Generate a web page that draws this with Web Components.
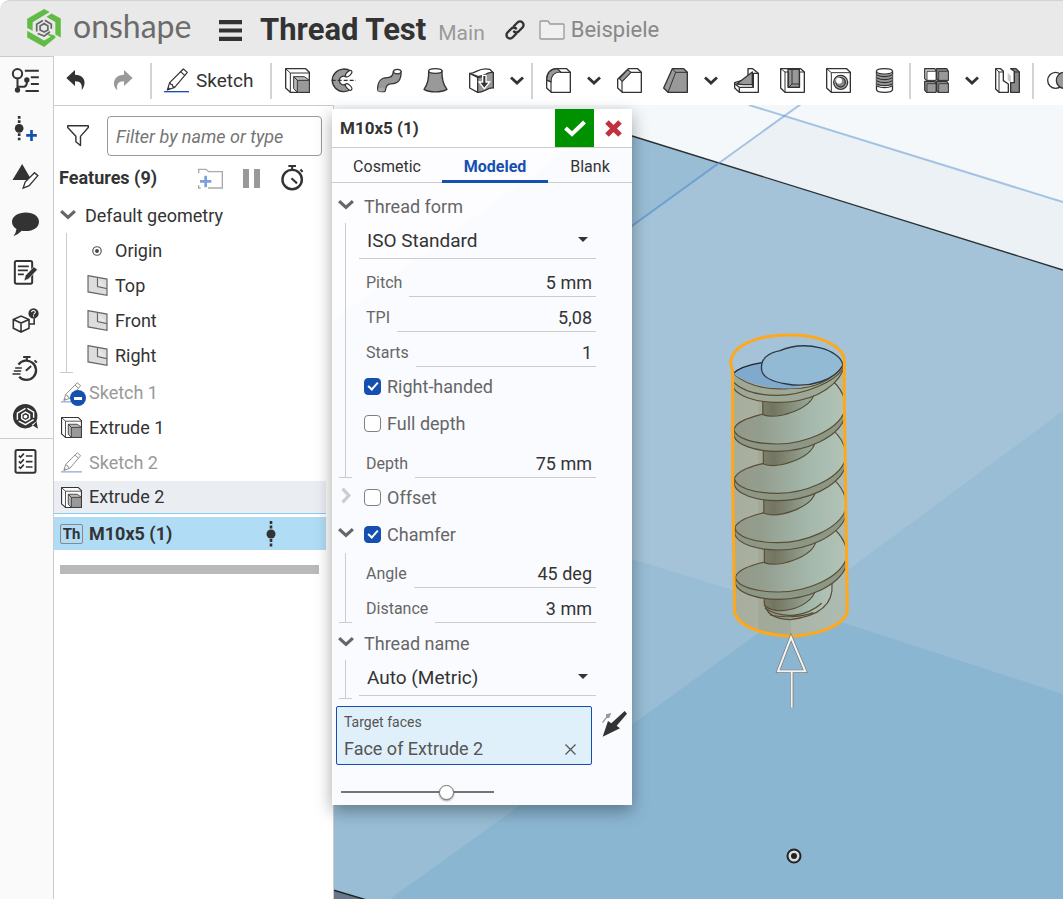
<!DOCTYPE html>
<html lang="en">
<head>
<meta charset="utf-8">
<meta name="viewport" content="width=device-width, initial-scale=1">
<title>Thread Test</title>
<style>
  html, body { margin: 0; height: 100%; }
  body { font-family: Roboto, "Liberation Sans", sans-serif; color: #333; background: #fff; }
</style>
</head>
<body>
<cad-app></cad-app>
<script>
const define = (name, html, setup) => {
  const template = document.createElement('template');
  template.innerHTML = html;
  customElements.define(name, class extends HTMLElement {
    connectedCallback() {
      if (this.shadowRoot) return;
      this.attachShadow({ mode: 'open' }).append(template.content.cloneNode(true));
      if (setup) setup(this, this.shadowRoot);
    }
  });
};

const box = '0 0 75 75';
const icons = {
  logo: ['0 0 99 112', `<g fill="#62bb46"><path d="M50 0 66 9 16 39V64L0 56V29Z"/><path d="M72 13 99 28V84L83 75V38L66 29 57 23Z" /><path d="M0 64 50 93 69 82 52 71 80 77 84 84 50 112 0 84Z"/></g><g fill="none" stroke="#666" stroke-width="5"><path d="M28 66V45L46 34"/><path d="M52 33 71 45V58"/><path d="M31 72 50 80 67 67"/><path d="M38 62V50L50 43 61 50V62L50 68Z"/></g>`],
  menu: ['0 0 22 20', `<path fill="#333" d="M0 0h22v4H0zM0 8h22v4H0zM0 16h22v4H0z"/>`],
  link: ['0 0 20 20', `<g fill="none" stroke="#333" stroke-width="2.400" stroke-linecap="round"><path d="M9 6 12.500 2.500a3.300 3.300 0 0 1 5 5L13.500 11.500a3.300 3.300 0 0 1-4.500 0"/><path d="M11 14 7.500 17.500a3.300 3.300 0 0 1-5-5L6.500 8.500a3.300 3.300 0 0 1 4.500 0"/></g>`],
  folder: ['0 0 26 20', `<path fill="#f0f0f0" stroke="#999" stroke-width="1.300" d="M1 2q0-1 1-1h7l2 3h13q1 0 1 1v13q0 1-1 1H2q-1 0-1-1z"/>`],
  undo: ['0 0 58 60', `<path fill="#333" d="M0 24 26 0V14C45 14 58 26 54 44 52 52 48 58 46 60 48 44 44 34 26 34V48Z"/>`],
  redo: ['0 0 58 60', `<path fill="#999" d="M58 24 32 0V14C13 14 0 26 2 44 3 52 8 58 12 60 9 44 14 34 32 34V48Z"/>`],
  sketch: [box, `<g fill="#fff" stroke="#333" stroke-width="3.500" stroke-linejoin="round"><path d="M10 66 17 44 58 3 70 13 32 58Z"/><path d="M17 44 21 49 25 50 26 55 32 58M50 11 62 22"/></g><path fill="#333" d="M10 66 13 57 19 62z"/><path fill="#1550b0" d="M0 69H75V73H0z"/>`],
  extrude: [box, `<g stroke="#333" stroke-width="3" stroke-linejoin="round"><path fill="#fff" stroke-width="4" d="M2 2H62L73 13V73H16L2 60Z"/><path fill="none" d="M2 2 16 15V73M16 15H73"/><path fill="#bbb" d="M26 26H58L73 37V73H37L26 62Z"/><path fill="#999" d="M37 37H73V73H37ZM26 26 37 37"/></g>`],
  revolve: [box, `<path fill="#999" stroke="#333" stroke-width="4" d="M60 10A35 34 0 1 0 60 64L44 49A13 13 0 1 1 44 26Z"/><g fill="#fff" stroke="#333" stroke-width="3.500"><ellipse cx="53" cy="17" rx="12" ry="6" transform="rotate(-45 53 17)"/><ellipse cx="53" cy="57" rx="12" ry="6" transform="rotate(45 53 57)"/></g><path d="M2 37H75" stroke="#333" stroke-width="4" stroke-dasharray="12 6"/>`],
  sweep: ['0 0 80 75', `<path fill="#999" stroke="#333" stroke-width="4" d="M2 66C2 36 14 28 34 28 46 28 51 22 52 9L77 9C78 38 66 48 44 48 32 49 28 56 27 69 26 76 2 74 2 66Z"/><ellipse cx="65" cy="9" rx="12" ry="7" fill="#fff" stroke="#333" stroke-width="4"/><ellipse cx="14" cy="67" rx="11" ry="6" fill="#aaa"/>`],
  loft: [box, `<path fill="#999" stroke="#333" stroke-width="4" stroke-linejoin="round" d="M17 9C18 35 10 55 3 64 20 74 54 74 72 64 62 52 56 35 57 9Z"/><ellipse cx="37" cy="9" rx="20" ry="7" fill="#fff" stroke="#333" stroke-width="4"/>`],
  thicken: [box, `<g stroke="#333" stroke-width="4" stroke-linejoin="round"><path fill="#fff" d="M2 16C20 18 30-4 62 4L73 14 28 26 2 16Z"/><path fill="#fff" d="M2 16 26 28V73L2 60Z"/><path fill="#999" d="M26 28C44 32 50 8 73 14V60C56 58 44 74 26 73Z"/></g><path fill="#333" stroke="#fff" stroke-width="4" d="M41 22H51V42H62L46 62 30 42H41Z"/>`],
  chevron: ['0 0 14 9', `<path fill="none" stroke="currentColor" stroke-width="2.800" d="M1 1.500 7 7 13 1.500"/>`],
  fillet: [box, `<g stroke="#333" stroke-width="3.500" stroke-linejoin="round"><path fill="#fff" stroke-width="4" d="M2 35Q4 2 34 2H62L73 13V73H16L2 60Z"/><path fill="#999" d="M2 36C3 14 14 2 34 2L44 12C26 12 15 22 15 42Z"/><path fill="none" d="M15 40V73M42 13H73M2 36 15 42"/></g>`],
  chamfer: [box, `<g stroke="#333" stroke-width="3.500" stroke-linejoin="round"><path fill="#fff" stroke-width="4" d="M2 34 34 2H62L73 13V73H16L2 60Z"/><path fill="#999" d="M7 32 32 5 42 13 16 40Z"/><path fill="none" d="M15 40V73M42 13H73"/></g>`],
  draft: [box, `<g stroke="#333" stroke-width="4" stroke-linejoin="round"><path fill="#999" d="M2 60 28 2H62L73 13V73H15Z"/><path fill="none" stroke-width="3" d="M15 73 38 13H73M28 2 38 13"/></g>`],
  rib: [box, `<g stroke="#333" stroke-width="4" stroke-linejoin="round"><path fill="#fff" d="M2 44 42 32V2H56L73 16V73H16L2 60Z"/><path fill="#999" d="M8 48 55 12V50H28Z"/><path fill="none" d="M2 47 16 58H58V16H73M55 50 58 58M16 58V73"/></g>`],
  shell: [box, `<g stroke="#333" stroke-width="4" stroke-linejoin="round"><path fill="#fff" d="M2 2H62L73 12V73H15L2 60Z"/><path fill="#999" d="M24 4H58V58H24Z"/><path fill="none" stroke-width="3" d="M2 2 15 12V73M15 12H26V58H59V12H73M36 4V48H58M36 48 26 58"/></g>`],
  hole: [box, `<g stroke="#333" stroke-width="4" stroke-linejoin="round"><path fill="#fff" d="M2 2H62L73 13V73H16L2 60Z"/><path fill="none" stroke-width="3" d="M2 2 16 14V73M16 14H73"/><circle cx="44" cy="43" r="21" fill="#bbb"/><circle cx="44" cy="43" r="14" fill="#888"/><circle cx="39" cy="38" r="9" fill="#fff" stroke="none"/></g>`],
  thread: ['0 0 52 75', `<path fill="#fff" stroke="#333" stroke-width="4" d="M2 9V65C4 76 48 76 50 65V9"/><path fill="#999" d="M2 18H50V54H2z"/><g fill="none" stroke="#333" stroke-width="3.500"><path d="M2 20Q26 32 50 20M2 29Q26 41 50 29M2 38Q26 50 50 38M2 47Q26 59 50 47M2 54Q26 64 50 54"/><ellipse cx="26" cy="10" rx="24" ry="8" fill="#fff"/></g>`],
  pattern: [box, `<g stroke="#333" stroke-width="3.500" stroke-linejoin="round"><path fill="#ccc" d="M2 2H33L36 10V37H8L2 32Z"/><path fill="#888" d="M38 2H68L73 10V37H42L38 32ZM2 40H33L36 47V73H8L2 66ZM38 40H68L73 47V73H42L38 66Z"/><g stroke-width="2.500"><path fill="#fff" d="M9 10H36V37H9z"/><path fill="#999" d="M44 10H73V37H44zM9 47H36V73H9zM44 47H73V73H44z"/></g></g>`],
  split: [box, `<path fill="#ccc" d="M26 2 48 24V44L38 36V14z"/><g stroke="#333" stroke-width="4" stroke-linejoin="round"><path fill="#fff" d="M2 2H17L25 10V38L40 48V73H12L2 63Z"/><path fill="none" stroke-width="3" d="M2 2 12 12V73M12 12H25"/><path fill="#888" d="M47 2H63L73 12V73H47V44H58V10Z"/><path fill="none" stroke-width="3" d="M58 12H73M58 44V10"/></g>`],
  boolean: [box, `<circle cx="26" cy="37" r="24" fill="#fff" stroke="#333" stroke-width="4"/><circle cx="52" cy="37" r="24" fill="#999" stroke="#333" stroke-width="4"/>`],
  plane: ['0 0 60 62', `<g fill="#ddd" stroke="#666" stroke-width="3.500"><path d="M2 2 58 12V60L2 50Z"/><path d="M30 7V34L58 40" fill="#e6e6e6"/></g>`],
  origin: ['0 0 26 26', `<circle cx="13" cy="13" r="11" fill="#fff" stroke="#555" stroke-width="3"/><circle cx="13" cy="13" r="5" fill="#444"/>`],
  funnel: ['0 0 62 62', `<path fill="none" stroke="#333" stroke-width="4" stroke-linejoin="round" d="M2 2H60V7L38 32V58L25 47V32L2 7Z"/>`],
  addfolder: [box, `<path fill="none" stroke="#aaa" stroke-width="4" d="M2 22V10H24L32 17H73V66H30M2 58V66H8"/><path fill="#7ea0da" d="M19 29H27V42H40V50H27V64H19V50H6V42H19z"/>`],
  pause: ['0 0 18 19', `<path fill="#999" d="M0 0h6v19H0zM11 0h6v19h-6z"/>`],
  timer: ['0 0 66 75', `<circle cx="32" cy="42" r="28" fill="none" stroke="#333" stroke-width="7"/><path stroke="#333" stroke-width="6" d="M21 3H43M32 3V14M56 13 62 20M30 38 46 53"/>`],
  state: ['0 0 10 26', `<path stroke="#333" stroke-width="2.600" stroke-dasharray="3 1.500" d="M5 0V26"/><circle cx="5" cy="13" r="4.500" fill="#333"/>`],
  tree: ['0 0 80 75', `<g fill="none" stroke="#333" stroke-width="6"><circle cx="16" cy="17" r="14"/><path d="M16 31V66M16 56H36Q46 54 44 36M38 8H80M56 28H80M56 48H80M40 69H80"/></g><g fill="#333"><circle cx="16" cy="66" r="8"/><circle cx="44" cy="36" r="8"/></g>`],
  addstate: ['0 0 78 75', `<path stroke="#333" stroke-width="8" stroke-dasharray="8 5" d="M20 0V75"/><circle cx="20" cy="37" r="13" fill="#333"/><path fill="#1550b0" d="M53 42H61V54H73V62H61V75H53V62H41V54H53z"/>`],
  appearance: ['0 0 78 75', `<path fill="#333" d="M29 0 57 48H0z"/><path fill="#fff" stroke="#333" stroke-width="4" d="M32 72 38 54 66 26 76 35 50 65Z"/>`],
  comment: ['0 0 78 70', `<path fill="#333" d="M40 0C62 0 78 11 78 27S62 54 40 54Q33 54 28 53 18 64 4 69 12 58 13 48 0 40 0 27C0 11 18 0 40 0Z"/>`],
  note: ['0 0 70 75', `<rect x="3" y="3" width="52" height="68" rx="5" fill="#fff" stroke="#333" stroke-width="6"/><path stroke="#333" stroke-width="5" d="M12 19H45M12 31H42M12 43H30"/><path fill="#333" stroke="#fafafa" stroke-width="2" d="M30 63 35 46 60 20 71 29 44 57Z"/>`],
  help: ['0 0 82 78', `<g fill="none" stroke="#333" stroke-width="5"><path d="M3 36 27 25 52 36V63L27 75 3 63ZM3 36 27 47 52 36M27 47V75M52 50H68V32"/></g><circle cx="66" cy="17" r="16" fill="#333"/><path d="M60 13Q61 7 67 8 73 10 71 15L66 20M66 23V27" stroke="#fff" stroke-width="3.500" fill="none"/>`],
  speed: ['0 0 78 75', `<path fill="none" stroke="#333" stroke-width="7" d="M18 26A29 29 0 1 1 20 62"/><path stroke="#333" stroke-width="6" d="M32 3H54M43 3V14M66 13 73 20M40 44 56 30"/><path stroke="#333" stroke-width="4" d="M8 36H28M4 45H26M0 54H24"/>`],
  learn: ['0 0 80 80', `<path fill="#333" d="M39 0A39 39 0 1 1 39 78 39 39 0 1 1 39 0M60 66 80 79 75 55z"/><g fill="none" stroke="#fff" stroke-width="4.500"><path d="M14 50V29L40 14M46 14 66 26V44M66 50 40 66 18 55"/><path d="M28 47V33L40 26 53 33V47L40 54Z"/></g><circle cx="40" cy="40" r="6" fill="#fff"/>`],
  checklist: ['0 0 66 75', `<rect x="3" y="3" width="60" height="68" rx="5" fill="#fff" stroke="#333" stroke-width="6"/><path fill="none" stroke="#333" stroke-width="5" d="M34 21H54M34 38H54M34 54H54M13 20 18 25 28 14M13 37 18 42 28 31M13 53 18 58 28 47"/>`],
  check: ['0 0 22 17', `<path fill="none" stroke="#fff" stroke-width="4" d="M1.500 8 8 14 20.500 2"/>`],
  cross: ['0 0 17 17', `<path stroke="#c22f3d" stroke-width="5" d="M2 2 15 15M15 2 2 15"/>`],
  remove: ['0 0 11 11', `<path stroke="#555" stroke-width="1.300" d="M.5.5 10.500 10.500M10.500.5.5 10.500"/>`],
  pick: [box, `<path fill="#333" d="M2 77 18 30 28 37 68 0 75 8 44 44 54 52Z"/><path fill="#999" d="M0 34 12 18 12 10 28 6 22 20 14 22 3 36Z"/>`],
  suppressed: ['0 0 16 16', `<circle cx="8" cy="8" r="8" fill="#1550b0"/><path fill="#fff" d="M4 7h8v3H4z"/>`]
};

define('cad-icon', `<style>:host{display:block;flex:none;width:25px;height:25px}svg{display:block;width:100%;height:100%;overflow:visible}</style>`,
  (host, root) => {
    const [viewBox, art] = icons[host.getAttribute('name')];
    root.append(document.createRange().createContextualFragment(
      `<svg viewBox="${viewBox}" aria-hidden="true">${art}</svg>`));
  });

define('doc-header', `
<style>
  :host { display: flex; align-items: center; height: 56px; box-sizing: border-box; padding: 3px 27px 0;
          background: #e9e9e9; border-top: 1px solid #d3d3d3; border-radius: 10px 0 0 0; white-space: nowrap; }
  .brand { display: flex; align-items: center; gap: 12px; color: #6b6b6b; text-decoration: none; width: 192px; }
  .brand span { font: 32px/36px Lato, sans-serif; margin-top: -8px; }
  .brand cad-icon { width: 34px; height: 38px; margin-top: -4px; }
  button { border: 0; background: none; padding: 0; }
  .menu cad-icon { width: 23px; height: 21px; }
  h1 { font-size: 31px; line-height: 36px; margin: 0 12px 0 18px; }
  .branch { font-size: 21px; line-height: 24px; color: #999; margin: 6px 20px 0 0; }
  .link cad-icon { width: 20px; height: 20px; margin-right: 14px; }
  .place { display: flex; align-items: center; gap: 6px; font-size: 22px; line-height: 24px; color: #888; text-decoration: none; }
  .place cad-icon { width: 26px; height: 20px; }
</style>
<a class="brand" href="#"><cad-icon name="logo"></cad-icon><span>onshape</span></a>
<button class="menu" aria-label="Menu"><cad-icon name="menu"></cad-icon></button>
<h1>Thread Test</h1><span class="branch">Main</span>
<button class="link" aria-label="Link"><cad-icon name="link"></cad-icon></button>
<a class="place" href="#"><cad-icon name="folder"></cad-icon><span>Beispiele</span></a>`);

define('side-rail', `
<style>
  :host { display: block; flex: none; width: 53px; background: #fafafa; border: 1px solid #ccc; border-width: 1px 1px 0 0; }
  button { display: grid; place-items: center; width: 100%; height: 48px; padding: 0 2px 2px 0; border: 0; background: none; }
  cad-icon { width: 27px; height: 25px; }
  .end { border-top: 1px solid #ccc; margin-top: -3px; }
</style>
<nav></nav>`,
  (host, root) => {
    root.querySelector('nav').innerHTML =
      [['tree', 'Feature tree'], ['addstate', 'Add state'], ['appearance', 'Appearance'], ['comment', 'Comments'], ['note', 'Notes'],
       ['help', 'Part help'], ['speed', 'Performance'], ['learn', 'Learning'], ['checklist', 'Checklist']]
      .map(([n, l]) => `<button class="${n === 'checklist' ? 'end' : ''}" aria-label="${l}"><cad-icon name="${n}"></cad-icon></button>`).join('');
  });

define('tool-bar', `
<style>
  :host { display: flex; align-items: center; height: 48px; overflow: hidden; background: #fff; }
  button { flex: none; display: flex; align-items: center; justify-content: center; width: 46px; height: 44px;
           padding: 0; border: 0; background: none; color: #333; font: 19px/24px Roboto, sans-serif; }
  cad-icon { margin-top: -2px; }
  .more { width: 25px; }
  .more cad-icon { width: 14px; height: 9px; }
  .history { width: 47px; padding-right: 3px; }
  .history cad-icon { width: 20px; height: 20px; }
  .sketch { width: 114px; gap: 7px; padding-left: 10px; justify-content: flex-start; }
  hr { flex: none; width: 2px; height: 36px; margin: 0 2px; border: 0; background: #d3d3d3; }
</style>`,
  (host, root) => {
    const tool = n => `<button aria-label="${n}"><cad-icon name="${n}"></cad-icon></button>`;
    const more = '<button class="more" aria-label="More"><cad-icon name="chevron"></cad-icon></button>';
    const bar = document.createRange().createContextualFragment(
      ['undo', 'redo'].map(n => `<button class="history" aria-label="${n}"><cad-icon name="${n}"></cad-icon></button>`).join('') +
      '<hr><button class="sketch"><cad-icon name="sketch"></cad-icon>Sketch</button><hr>' +
      ['extrude', 'revolve', 'sweep', 'loft', 'thicken'].map(tool).join('') + more + '<hr>' +
      tool('fillet') + more + ['chamfer', 'draft'].map(tool).join('') + more +
      ['rib', 'shell', 'hole', 'thread'].map(tool).join('') + '<hr>' + tool('pattern') + more + tool('split') + '<hr>' + tool('boolean'));
    root.append(bar);
  });

define('feature-row', `
<style>
  :host { display: flex; align-items: center; gap: 7px; height: 33px; margin: 1px 0; padding-left: 6px; font-size: 18px; line-height: 22px; }
  :host([dim]) { color: #999; }
  :host([dim]) .art { opacity: .55; }
  :host([hover]) { background: #eaedf2; border-bottom: 1px solid #86cbf0; height: 32px; }
  :host([picked]) { background: #b0dcf5; font-weight: bold; margin-top: 2px; }
  :host([icon="chevron"]) { gap: 9px; }
  :host([icon="chevron"]) .icon { width: 16px; }
  .icon { position: relative; display: grid; place-items: center; width: 22px; }
  .art { width: 21px; height: 21px; }
  .small { width: 10px; height: 10px; }
  .chevron { width: 16px; height: 11px; color: #666; margin-top: -3px; }
  .badge { position: absolute; left: 10px; top: 8px; width: 16px; height: 16px; }
  .tag { box-sizing: border-box; width: 23px; height: 20px; border: 1px solid #888; border-radius: 2px; font-size: 15px; line-height: 18px; text-align: center; }
  .state { width: 10px; height: 26px; margin-left: auto; margin-right: 50px; }
</style>
<span class="icon"></span><slot></slot>`,
  (host, root) => {
    const kind = host.getAttribute('icon'), holder = root.querySelector('.icon');
    holder.innerHTML = kind === 'tag' ? '<span class="tag">Th</span>'
      : `<cad-icon class="${kind === 'origin' ? 'small' : kind === 'chevron' ? 'chevron' : 'art'}" name="${kind}"></cad-icon>`;
    if (host.hasAttribute('suppressed')) holder.insertAdjacentHTML('beforeend', '<cad-icon class="badge" name="suppressed"></cad-icon>');
    if (host.hasAttribute('picked')) root.append(document.createRange().createContextualFragment('<cad-icon class="state" name="state"></cad-icon>'));
  });

define('feature-panel', `
<style>
  :host { display: block; flex: none; width: 280px; box-sizing: border-box; border: 1px solid #ccc; border-width: 1px 1px 0 0; background: #fff; }
  .filter { display: flex; align-items: center; gap: 18px; padding: 10px 11px 0 13px; }
  .filter cad-icon { width: 22px; height: 22px; }
  input { flex: 1; min-width: 0; height: 40px; box-sizing: border-box; border: 1px solid #999; border-radius: 4px; padding: 0 8px;
          font: italic 18px/22px Roboto, sans-serif; background: #fff; }
  input::placeholder { color: #757575; opacity: 1; }
  .title { display: flex; align-items: center; height: 42px; box-sizing: border-box; padding: 2px 29px 0 5px; }
  h2 { flex: 1; margin: 0; font-size: 18px; line-height: 22px; }
  .title button { border: 0; background: none; padding: 0; margin-left: 20px; }
  .pause { width: 18px; height: 19px; }
  .time { width: 23px; height: 26px; }
  .list { display: flex; flex-direction: column; padding-right: 7px; }
  .children { display: flex; flex-direction: column; margin: 0 0 2px 12px; border-left: 1px solid #ccc; position: relative; }
  .children::after { content: ""; position: absolute; left: -7px; bottom: 0; width: 13px; border-bottom: 1px solid #ccc; }
  .children feature-row { padding-left: 19px; }
  .rollback { height: 9px; margin: 14px 14px 0 6px; background: #b9b9b9; }
</style>
<div class="filter"><cad-icon name="funnel"></cad-icon><input type="text" aria-label="Filter" placeholder="Filter by name or type"></div>
<div class="title"><h2>Features (9)</h2>
  <button aria-label="Add folder"><cad-icon name="addfolder"></cad-icon></button>
  <button aria-label="Pause"><cad-icon class="pause" name="pause"></cad-icon></button>
  <button aria-label="Regeneration times"><cad-icon class="time" name="timer"></cad-icon></button></div>
<div class="list">
  <feature-row icon="chevron">Default geometry</feature-row>
  <div class="children">
    <feature-row icon="origin">Origin</feature-row><feature-row icon="plane">Top</feature-row>
    <feature-row icon="plane">Front</feature-row><feature-row icon="plane">Right</feature-row>
  </div>
  <feature-row icon="sketch" dim suppressed>Sketch 1</feature-row>
  <feature-row icon="extrude">Extrude 1</feature-row>
  <feature-row icon="sketch" dim>Sketch 2</feature-row>
  <feature-row icon="extrude" hover>Extrude 2</feature-row>
  <feature-row icon="tag" picked>M10x5 (1)</feature-row>
</div>
<div class="rollback"></div>`);

define('param-field', `
<style>
  :host { display: flex; align-items: flex-end; height: 35px; }
  label { font-size: 16px; line-height: 20px; color: #666; padding-bottom: 4px; }
  input { flex: 1; min-width: 0; width: 0; height: 28px; box-sizing: border-box; margin-left: 7px; padding: 0 4px 0 0; border: 0;
          border-bottom: 1px solid #ccc; background: none; color: #333; font: 18px/22px Roboto, sans-serif; text-align: right; }
</style>
<label for="value"></label><input id="value" type="text">`,
  (host, root) => {
    root.querySelector('label').textContent = host.getAttribute('label');
    root.querySelector('input').value = host.getAttribute('value');
  });

define('check-field', `
<style>
  :host { display: flex; align-items: center; height: 37px; gap: 6px; }
  input { appearance: none; position: relative; flex: none; width: 17px; height: 17px; margin: 0; border: 1px solid #808080; border-radius: 4px; background: #fff; box-sizing: border-box; }
  input:checked { background: #1550b0; border-color: #1550b0; }
  input:checked::before { content: ""; position: absolute; left: 5px; top: 1px; width: 4px; height: 8px; border: solid #fff; border-width: 0 2px 2px 0; transform: rotate(42deg); }
  label { font-size: 18px; line-height: 22px; color: #666; }
</style>
<input id="box" type="checkbox"><label for="box"><slot></slot></label>`,
  (host, root) => { root.querySelector('input').checked = host.hasAttribute('checked'); });

define('choice-field', `
<style>
  :host { display: block; position: relative; margin-left: -7px; }
  select { appearance: none; display: block; width: 100%; height: 36px; padding: 0 8px; border: 0; border-bottom: 1px solid #ccc;
           background: none; color: #333; font: 19px/24px Roboto, sans-serif; border-radius: 0; }
  i { position: absolute; right: 8px; top: 14px; border: 5px solid transparent; border-top-color: #333; border-bottom: 0; pointer-events: none; }
</style>
<select></select><i></i>`,
  (host, root) => {
    const select = root.querySelector('select');
    select.setAttribute('aria-label', host.getAttribute('label'));
    select.add(new Option(host.getAttribute('value')));
  });

define('param-group', `
<style>
  :host { display: block; }
  :host([closed]) { padding-top: 1px; }
  .head { display: flex; align-items: center; height: 37px; box-sizing: border-box; color: #666; font-size: 18px; line-height: 22px; }
  :host([titled]) .head { padding-top: 4px; }
  .head cad-icon { width: 16px; height: 11px; margin: -4px 10px 0 6px; }
  :host([closed]) .head cad-icon { color: #ccc; transform: rotate(-90deg); }
  .body { display: flow-root; position: relative; margin-left: 13px; padding: 0 36px 0 20px; border-left: 1px solid #ccc; }
  .body::after { content: ""; position: absolute; left: -7px; bottom: 0; width: 13px; border-bottom: 1px solid #ccc; }
  :host([closed]) .body { display: none; }
</style>
<div class="head"><cad-icon name="chevron"></cad-icon><slot name="head"></slot></div>
<div class="body"><slot></slot></div>`);

define('thread-dialog', `
<style>
  :host { display: block; width: 300px; background: rgba(253, 253, 255, .97); box-shadow: 0 6px 16px rgba(0, 0, 0, .35); }
  header { display: flex; align-items: center; height: 38px; background: #fff; border-bottom: 1px solid #ccc; }
  h2 { flex: 1; margin: 0; padding-left: 8px; font-size: 17px; line-height: 22px; }
  button { border: 0; padding: 0; background: none; display: grid; place-items: center; }
  .ok { width: 39px; height: 38px; background: #009100; }
  .ok cad-icon { width: 22px; height: 17px; }
  .cancel { width: 38px; height: 38px; }
  .cancel cad-icon { width: 17px; height: 17px; }
  .tabs { display: grid; grid-template-columns: 110px 106px 84px; height: 34px; border-bottom: 1px solid #ccc; }
  .tabs button { font: 16px/20px Roboto, sans-serif; color: #333; height: 35px; padding-top: 5px; box-sizing: border-box; border-bottom: 3px solid transparent; }
  .tabs .on { color: #1550b0; font-weight: bold; border-bottom-color: #1550b0; }
  .form { padding-top: 3px; }
  .checks { padding: 1px 0; margin-left: -2px; }
  .spaced { margin-top: 3px; }
  .lift { padding-bottom: 3px; }
  .target { display: flex; padding: 7px 4px 0; gap: 9px; }
  .faces { flex: 1; box-sizing: border-box; height: 59px; padding: 5px 15px 3px 7px; border: 1px solid #1550b0; border-radius: 2px; background: #dff0fa; color: #555; }
  .faces div { font-size: 14px; line-height: 20px; }
  .faces p { display: flex; align-items: center; justify-content: space-between; margin: 5px 0 0; font-size: 18px; line-height: 24px; }
  .faces cad-icon { width: 11px; height: 11px; }
  .pick { width: 27px; height: 34px; }
  input { appearance: none; display: block; width: 153px; height: 16px; margin: 19px 9px 0; padding: 0 0 5px; background: none; }
  input::-webkit-slider-runnable-track { height: 2px; background: #757575; }
  input::-webkit-slider-thumb { appearance: none; width: 15px; height: 15px; margin-top: -6px; border: 1px solid #777; border-radius: 50%; background: #fff; box-shadow: 0 1px 2px rgba(0,0,0,.4); box-sizing: border-box; }
</style>
<header><h2>M10x5 (1)</h2>
  <button class="ok" aria-label="Accept"><cad-icon name="check"></cad-icon></button>
  <button class="cancel" aria-label="Cancel"><cad-icon name="cross"></cad-icon></button></header>
<div class="tabs"><button>Cosmetic</button><button class="on">Modeled</button><button>Blank</button></div>
<div class="form">
  <param-group titled><span slot="head">Thread form</span>
    <choice-field label="Thread form" value="ISO Standard"></choice-field>
    <param-field class="spaced" label="Pitch" value="5 mm"></param-field>
    <param-field label="TPI" value="5,08"></param-field>
    <param-field label="Starts" value="1"></param-field>
    <div class="checks"><check-field checked>Right-handed</check-field><check-field>Full depth</check-field></div>
    <param-field label="Depth" value="75 mm"></param-field>
  </param-group>
  <param-group closed><check-field slot="head">Offset</check-field></param-group>
  <param-group><check-field slot="head" checked>Chamfer</check-field>
    <param-field label="Angle" value="45 deg"></param-field>
    <param-field label="Distance" value="3 mm"></param-field>
  </param-group>
  <param-group titled><span slot="head">Thread name</span>
    <choice-field class="lift" label="Thread name" value="Auto (Metric)"></choice-field>
  </param-group>
</div>
<div class="target"><div class="faces"><div>Target faces</div>
  <p>Face of Extrude 2<button aria-label="Remove"><cad-icon name="remove"></cad-icon></button></p></div>
  <button class="pick" aria-label="Select"><cad-icon name="pick"></cad-icon></button></div>
<input type="range" min="0" max="100" value="71" aria-label="Preview opacity">`);

/* One turn of the thread: flank, core and the double-edged crest below it. */
const turn = n => `<g transform="translate(${n * 1.5} ${n * 148})">
  <path fill="url(#flank)" stroke="none" d="M70 180C80 152 130 142 157 134L240 90 370 38C395 57 403 92 403 125 380 185 280 224 200 224 120 224 75 204 70 180Z"/>
  <path fill="none" d="M70 180C80 152 130 142 157 134M370 38C388 55 396 70 402 90"/>
  <path fill="url(#core)" d="M157 85V136C200 152 300 120 312 72Z"/>
  <path fill="#8c9785" d="M70 180C75 204 120 224 200 224 280 224 380 185 403 125V146C380 205 290 246 200 246 130 246 80 226 70 200Z"/></g>`;

define('model-view', `
<style>:host { display: block; position: relative; flex: 1; min-width: 0; overflow: hidden; background: #f4f8fb; } svg { position: absolute; inset: 0; width: 100%; height: 100%; }</style>
<svg viewBox="334 105 729 794" preserveAspectRatio="xMinYMin slice" role="img" aria-label="Threaded rod on a plate">
  <defs>
    <linearGradient id="flank" x1="0" x2="1"><stop offset="0" stop-color="#949888"/><stop offset=".25" stop-color="#939e8f"/><stop offset=".65" stop-color="#a3b7aa"/><stop offset="1" stop-color="#b2c4b8"/></linearGradient>
    <linearGradient id="core" x1="0" x2="1"><stop offset="0" stop-color="#7b7e69"/><stop offset=".2" stop-color="#737561"/><stop offset="1" stop-color="#9cae9f"/></linearGradient>
    <linearGradient id="metal" x1="0" x2="1"><stop offset="0" stop-color="#a8ad9c"/><stop offset="1" stop-color="#adbcb2"/></linearGradient>
    <clipPath id="rod"><path d="M68 150C70 150 70 880 76 880 90 925 165 945 243 947 320 945 400 920 412 875V130L400 120V60H68Z"/></clipPath>
  </defs>
  <path fill="#ecf1f6" d="M784 115 1063 202V270L719 163Z"/>
  <path fill="#a4c3d9" d="M333 320 600 126 1063 270V899H333Z"/>
  <path fill="#98bdd5" d="M333 320 600 126 719 163 333 443Z"/>
  <path fill="#98bdd5" d="M333 468 795 609 333 942ZM795 609 1063 411V694Z"/>
  <path fill="#8bb6d2" d="M795 607 1063 694V899H390Z"/>
  <path fill="#66798b" stroke="#222" stroke-width="1.500" d="M330 889 370 901H330Z"/>
  <path fill="none" stroke="#2a2f33" stroke-width="1.400" d="M600 126 1063 270"/>
  <g fill="none" stroke="#5a93cd" stroke-opacity=".5" stroke-width="2"><path d="M749 105 1063 202"/><path stroke-opacity=".7" d="M719 163 333 442"/><path d="M801 104 719 163"/></g>
  <g transform="translate(710 320) scale(.3333)">
    <path fill="url(#metal)" d="M66 165 74 880C90 925 165 945 243 947 320 945 400 920 412 875L400 135 240 200Z"/>
    <path fill="#919886" opacity=".3" d="M145 200H243V947C205 945 175 940 145 930Z"/>
    <g clip-path="url(#rod)" stroke="#594d35" stroke-width="3.500">
      <path fill="url(#flank)" d="M170 835C250 850 320 800 366 790 372 860 320 890 240 899 190 897 165 880 163 845Z"/>
      <path fill="none" d="M165 865C220 900 290 890 335 850M180 885C220 895 280 890 310 878"/>
      <path fill="url(#core)" d="M163 820V855C190 890 300 870 318 808Z"/>
      ${[4, 3, 2, 1].map(turn).join('')}
      <path fill="#9da896" d="M68 160C110 195 170 212 240 205 310 208 370 180 400 135V150C370 215 290 248 200 247 130 246 80 226 70 202Z"/>
      <path fill="none" d="M69 186C100 215 150 226 200 226 280 226 380 185 400 142"/>
    </g>
    <path fill="#7faace" d="M68 160C90 140 130 132 155 128V150C160 180 210 190 240 194L280 203C200 212 110 195 68 160Z"/>
    <path fill="none" stroke="#222" stroke-width="4" d="M68 162C90 140 130 132 155 128"/>
    <path fill="#92bad5" stroke="#2b3740" stroke-width="4" d="M155 150C150 115 175 99 210 92 290 58 390 90 399 135 375 180 300 205 230 192 180 184 157 168 155 150Z"/>
    <path fill="none" stroke="#ffa81a" stroke-width="9" d="M68 155 62 130C64 80 130 45 240 45 330 43 400 80 403 120V235L408 600 412 875C400 920 320 945 243 949 165 945 90 925 74 880L68 490V155Z"/>
    <g fill="none" stroke="#777" stroke-width="10"><path d="M243 952 204 1054H286Z"/><path d="M245 1056V1163"/></g>
    <g fill="none" stroke="#f2f2f2" stroke-width="6"><path d="M243 952 204 1054H286Z"/><path d="M245 1056V1163"/></g>
  </g>
  <circle cx="794" cy="856" r="6.500" fill="#ddd" stroke="#222" stroke-width="2"/><circle cx="794" cy="856" r="3" fill="#222"/>
</svg>`);

define('cad-app', `
<style>
  :host { display: flex; flex-direction: column; min-height: 100%; background: #fff; }
  .work { display: flex; flex: 1; }
  .studio { flex: 1; min-width: 0; display: flex; flex-direction: column; padding-top: 1px; }
  .stage { position: relative; flex: 1; display: flex; min-height: 720px; }
  thread-dialog { position: absolute; left: 278px; top: 4px; }
</style>
<doc-header></doc-header>
<div class="work"><side-rail></side-rail>
  <div class="studio"><tool-bar></tool-bar>
    <div class="stage"><feature-panel></feature-panel><model-view></model-view><thread-dialog></thread-dialog></div>
  </div>
</div>`);
</script>
</body>
</html>
